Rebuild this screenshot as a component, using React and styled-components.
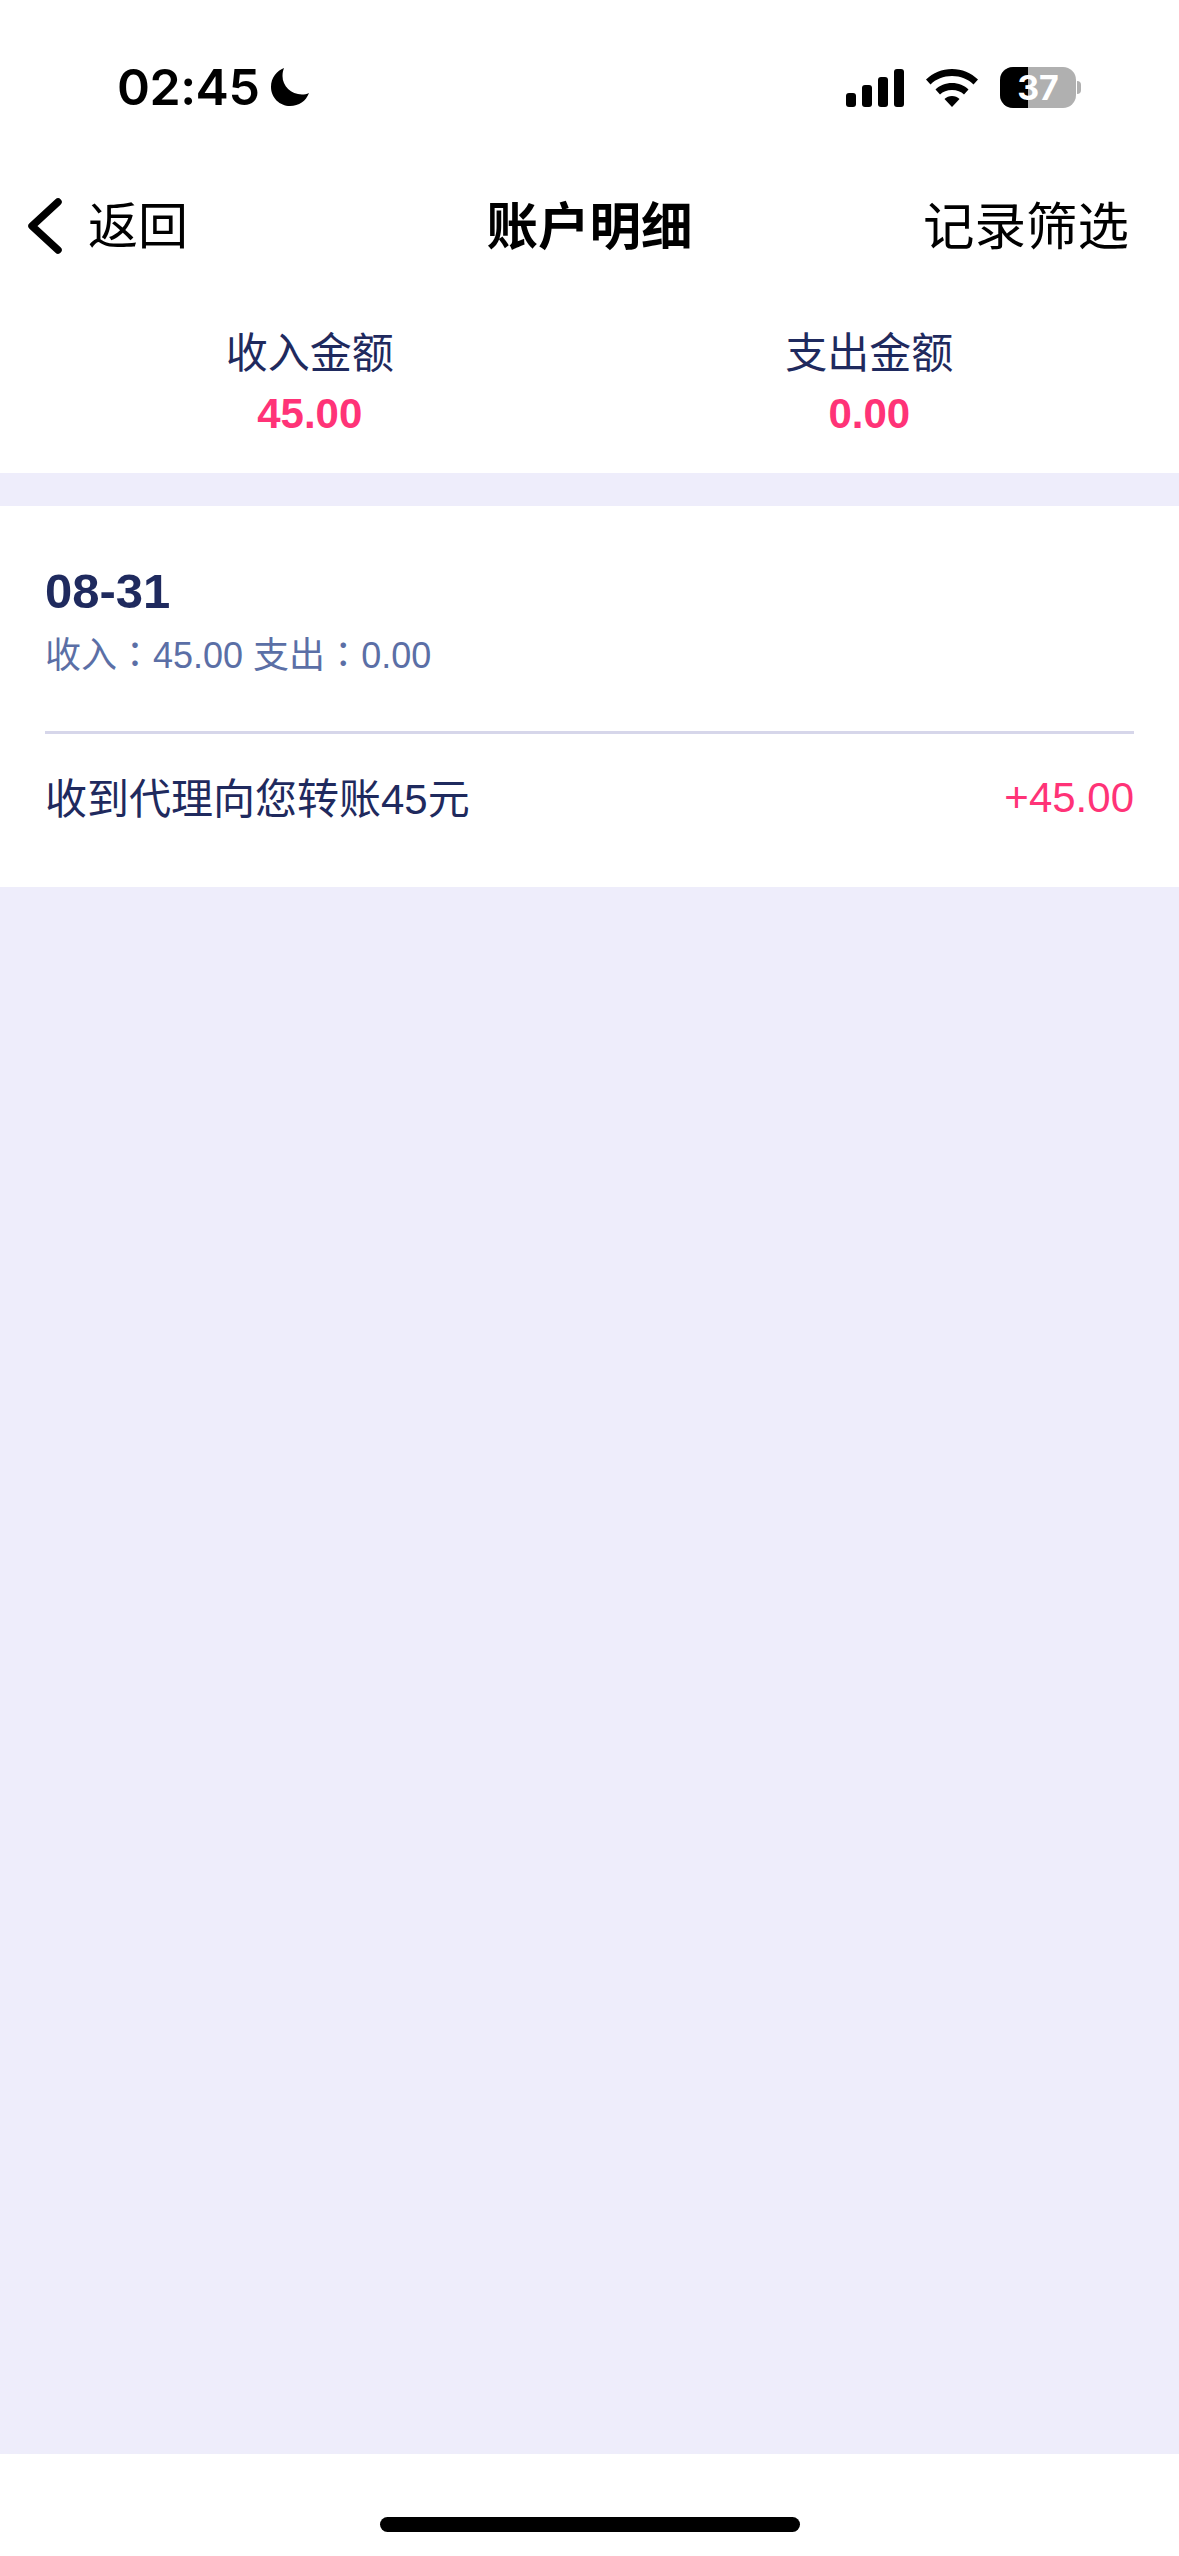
import styled, { createGlobalStyle } from 'styled-components'

const GlobalStyle = createGlobalStyle`
    html, body {
        margin: 0;
        padding: 0;
        background: #fff;
    }
    body {
        font-family: "Liberation Sans", "Noto Sans CJK SC", sans-serif;
    }
    * {
        box-sizing: border-box;
    }
`

const Moon = () => (
    <svg width="40" height="40" viewBox="0 0 40 40">
        <path fill="#000" d="M14 1 C7 4 1 10 1 20 C1 31 10 39 20 39 C29 39 36 34 39 26 C37 27 34 27.500 32 27.500 C21 27.500 12.500 19 12.500 9 C12.500 6 13 3.500 14 1 Z" />
    </svg>
)

const Signal = () => (
    <svg width="58" height="38" viewBox="0 0 58 38">
        <rect x="0" y="24" width="10" height="14" rx="3" />
        <rect x="16" y="16" width="10" height="22" rx="3" />
        <rect x="32" y="8" width="10" height="30" rx="3" />
        <rect x="48" y="0" width="10" height="38" rx="3" />
    </svg>
)

const Wifi = () => (
    <svg width="52" height="38" viewBox="0 0 52 38">
        <path d="M26 0 C16 0 7 4 0 10.500 L4.500 15.500 C10 10 17.500 7 26 7 C34.500 7 42 10 47.500 15.500 L52 10.500 C45 4 36 0 26 0 Z" />
        <path d="M26 14 C19.500 14 13.500 16.500 9.500 20.500 L14 25.500 C17 22.500 21 21 26 21 C31 21 35 22.500 38 25.500 L42.500 20.500 C38.500 16.500 32.500 14 26 14 Z" />
        <path d="M26 27 C23 27 20.500 28 18.500 30 L26 38 L33.500 30 C31.500 28 29 27 26 27 Z" />
    </svg>
)

const BackArrow = () => (
    <BackIcon width="36" height="58" viewBox="0 0 36 58">
        <path d="M31 5 L5 29 L31 53" fill="none" stroke="#000" strokeWidth="7.500" strokeLinecap="round" strokeLinejoin="round" />
    </BackIcon>
)

export default function App() {
    return (
        <Page>
            <GlobalStyle />
            <Header>
                <StatusBar>
                    <TimeBox>
                        <Time>02:45</Time>
                        <Moon />
                    </TimeBox>
                    <StatusIcons>
                        <Signal />
                        <Wifi />
                        <BatteryBox>
                            <Battery>
                                <BatteryFill />
                                <BatteryText>37</BatteryText>
                            </Battery>
                            <BatteryCap />
                        </BatteryBox>
                    </StatusIcons>
                </StatusBar>
                <NavBar>
                    <BackBtn>
                        <BackArrow />
                        <span>返回</span>
                    </BackBtn>
                    <Title>账户明细</Title>
                    <FilterBtn>记录筛选</FilterBtn>
                </NavBar>
                <Summary>
                    <SummaryItem>
                        <SummaryLabel>收入金额</SummaryLabel>
                        <SummaryValue>45.00</SummaryValue>
                    </SummaryItem>
                    <SummaryItem>
                        <SummaryLabel>支出金额</SummaryLabel>
                        <SummaryValue>0.00</SummaryValue>
                    </SummaryItem>
                </Summary>
            </Header>

            <Content>
                <Card>
                    <DayHead>
                        <DayDate>08-31</DayDate>
                        <DayTotal>收入<Colon>：</Colon>45.00 支出<Colon>：</Colon>0.00</DayTotal>
                    </DayHead>
                    <Row>
                        <RowName>收到代理向您转账45元</RowName>
                        <RowAmount>+45.00</RowAmount>
                    </Row>
                </Card>
            </Content>

            <HomeArea>
                <HomeBar />
            </HomeArea>
        </Page>
    )
}

const Page = styled.div`
    width: 1179px;
    height: 2556px;
    display: flex;
    flex-direction: column;
    background: #eeedfb;
`

const Header = styled.header`
    background: #fff;
    height: 473px;
`

const StatusBar = styled.div`
    height: 160px;
    padding: 67px 98px 0 117px;
    display: flex;
    justify-content: space-between;
    align-items: flex-start;
`

const TimeBox = styled.div`
    display: flex;
    align-items: center;
    gap: 11px;
`

const Time = styled.span`
    font-family: Inter, sans-serif;
    font-size: 50px;
    font-weight: 600;
    letter-spacing: -0.5px;
    line-height: 40px;
    color: #000;
`

const StatusIcons = styled.div`
    display: flex;
    align-items: center;
    gap: 22px;
`

const BatteryBox = styled.div`
    display: flex;
    align-items: center;
    gap: 1px;
`

const Battery = styled.div`
    position: relative;
    width: 76px;
    height: 41px;
    border-radius: 13px;
    background: #b0b0b0;
    overflow: hidden;
`

const BatteryFill = styled.div`
    width: 37%;
    height: 100%;
    background: #000;
`

const BatteryText = styled.span`
    position: absolute;
    inset: 0;
    display: flex;
    align-items: center;
    justify-content: center;
    color: #fff;
    font-family: Inter, sans-serif;
    font-size: 34px;
    font-weight: 700;
`

const BatteryCap = styled.div`
    width: 4px;
    height: 13px;
    background: #b0b0b0;
    border-radius: 0 4px 4px 0;
`

const NavBar = styled.nav`
    height: 133px;
    padding: 0 50px 9px 27px;
    display: flex;
    align-items: center;
    justify-content: space-between;
    position: relative;
    color: #000;
    font-size: 51.500px;
`

const BackBtn = styled.div`
    display: flex;
    align-items: center;
    gap: 25px;
    font-size: 50px;
`

const BackIcon = styled.svg`
    margin-top: 8px;
`

const Title = styled.div`
    position: absolute;
    left: 0;
    right: 0;
    text-align: center;
    font-weight: 700;
`

const FilterBtn = styled.div``

const Summary = styled.div`
    display: grid;
    grid-template-columns: 1fr 1fr;
    padding: 32px 30px 0;
`

const SummaryItem = styled.div`
    display: flex;
    flex-direction: column;
    align-items: center;
`

const SummaryLabel = styled.div`
    font-size: 42px;
    line-height: 58px;
    color: #1f2a5e;
`

const SummaryValue = styled.div`
    margin-top: 6px;
    font-size: 42px;
    line-height: 50px;
    font-weight: 700;
    color: #ff3377;
`

const Content = styled.main`
    flex: 1;
    padding-top: 33px;
`

const Card = styled.section`
    background: #fff;
    padding: 0 45px;
    height: 381px;
`

const DayHead = styled.div`
    height: 228px;
    padding-top: 57px;
    border-bottom: 3px solid #d6d6ea;
`

const DayDate = styled.div`
    font-size: 49px;
    line-height: 56px;
    font-weight: 700;
    color: #1f2a5e;
`

const DayTotal = styled.div`
    margin-top: 12px;
    font-size: 36px;
    line-height: 50px;
    color: #5b6fa6;
`

const Colon = styled.span`
    font-family: "Noto Sans CJK TC", sans-serif;
    line-height: 0;
`

const Row = styled.div`
    display: flex;
    align-items: center;
    justify-content: space-between;
    height: 128px;
`

const RowName = styled.div`
    font-size: 42px;
    padding-bottom: 6px;
    color: #1f2a5e;
`

const RowAmount = styled.div`
    font-size: 42px;
    color: #ff3377;
`

const HomeArea = styled.footer`
    height: 102px;
    background: #fff;
    padding-top: 63px;
`

const HomeBar = styled.div`
    width: 420px;
    height: 15px;
    margin: 0 auto;
    background: #000;
    border-radius: 8px;
`
